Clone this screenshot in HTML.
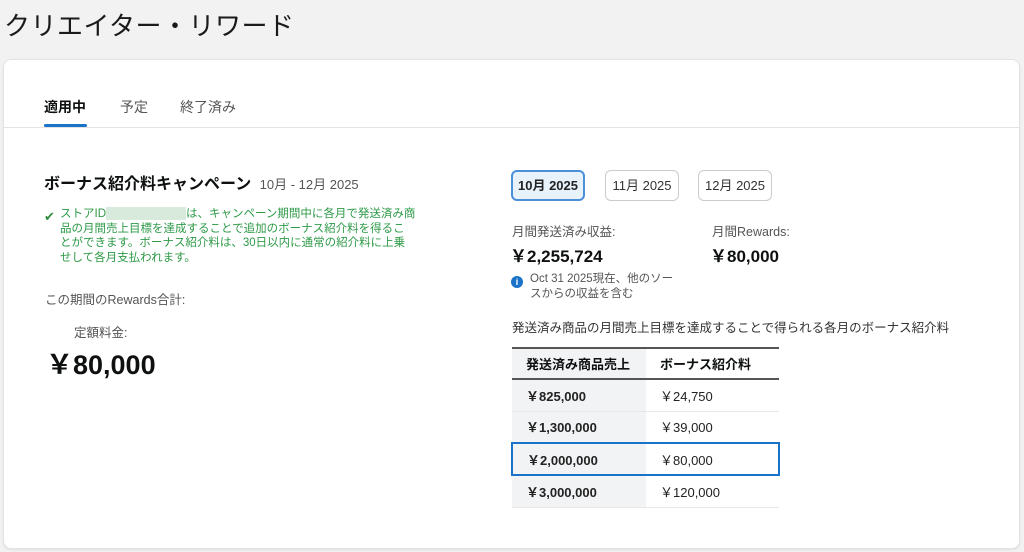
<!DOCTYPE html>
<html><head><meta charset="utf-8"><style>
*{margin:0;padding:0;box-sizing:border-box}
body{width:1024px;height:552px;background:#f2f2f2;font-family:"Liberation Sans","Noto Sans CJK JP",sans-serif;color:#0f1111;position:relative;overflow:hidden}
.abs{position:absolute;white-space:nowrap}
h1{position:absolute;left:4px;top:6px;font-size:26px;font-weight:400;color:#1a1a1a;letter-spacing:0.5px}
.card{position:absolute;left:3px;top:59px;width:1017px;height:490px;background:#fff;border:1px solid #e3e3e3;border-radius:8px;box-shadow:0 1px 2px rgba(0,0,0,.08)}
.tab{font-size:14px;color:#555}
.btn{position:absolute;top:170px;height:31px;width:74px;border:1px solid #c8ccd0;border-radius:6px;font-size:13px;text-align:center;line-height:29px;color:#333}
table{position:absolute;left:511px;top:347px;border-collapse:collapse;font-size:13px}
td,th{height:32px;text-align:left;padding-left:14px}
th{font-weight:700;border-top:2px solid #555;border-bottom:2px solid #555;height:31px}
td:first-child,th:first-child{background:#f2f3f5;width:134px;font-weight:700}
td:last-child,th:last-child{width:133px}
td{border-bottom:1px solid #e7e7e7;color:#222}
tr.hl td{border-top:2px solid #1a73c9;border-bottom:2px solid #1a73c9}
tr.hl td:first-child{border-left:2px solid #1a73c9}
tr.hl td:last-child{border-right:2px solid #1a73c9}
</style></head><body>
<h1>クリエイター・リワード</h1>
<div class="card"></div>
<div class="abs tab" style="left:44px;top:97px;color:#0f1111;font-weight:700">適用中</div>
<div class="abs" style="left:44px;top:124px;width:43px;height:3px;background:#1a73c9;border-radius:2px"></div>
<div class="abs tab" style="left:120px;top:97px">予定</div>
<div class="abs tab" style="left:180px;top:97px">終了済み</div>
<div class="abs" style="left:4px;top:127px;width:1015px;height:1px;background:#e3e3e3"></div>

<div class="abs" style="left:44px;top:170px;font-size:16px;font-weight:700">ボーナス紹介料キャンペーン <span style="font-size:13px;font-weight:400;color:#555;margin-left:4px">10月 - 12月 2025</span></div>
<div class="abs" style="left:44px;top:209px;color:#2e8b3a;font-size:13px">✔</div>
<div class="abs" style="left:60px;top:207px;font-size:11.5px;line-height:14.5px;color:#2e9a48;white-space:normal;width:356px">ストアID<span style="display:inline-block;width:80px;height:13px;background:#d8eadc;vertical-align:middle"></span>は、キャンペーン期間中に各月で発送済み商品の月間売上目標を達成することで追加のボーナス紹介料を得ることができます。ボーナス紹介料は、30日以内に通常の紹介料に上乗せして各月支払われます。</div>
<div class="abs" style="left:45px;top:289px;font-size:12.5px;color:#555">この期間のRewards合計:</div>
<div class="abs" style="left:74px;top:322px;font-size:12.5px;color:#555">定額料金:</div>
<div class="abs" style="left:46px;top:343px;font-size:27px;font-weight:700">￥80,000</div>

<div class="btn" style="left:511px;background:#e8f2fb;border:2px solid #4a90d9;line-height:27px;font-weight:700;color:#222">10月 2025</div>
<div class="btn" style="left:605px">11月 2025</div>
<div class="btn" style="left:698px">12月 2025</div>

<div class="abs" style="left:512px;top:221px;font-size:12.5px;color:#555">月間発送済み収益:</div>
<div class="abs" style="left:510px;top:242px;font-size:17px;font-weight:700">￥2,255,724</div>
<div class="abs" style="left:712px;top:221px;font-size:12.5px;color:#555">月間Rewards:</div>
<div class="abs" style="left:710px;top:242px;font-size:17px;font-weight:700">￥80,000</div>
<div class="abs" style="left:511px;top:276px;width:12px;height:12px;border-radius:50%;background:#1a73c9;color:#fff;font-size:9px;font-weight:700;text-align:center;line-height:12px">i</div>
<div class="abs" style="left:530px;top:272px;font-size:11.5px;line-height:15px;color:#555">Oct 31 2025現在、他のソー<br>スからの収益を含む</div>
<div class="abs" style="left:512px;top:317px;font-size:12.5px;color:#333">発送済み商品の月間売上目標を達成することで得られる各月のボーナス紹介料</div>

<table>
<tr><th>発送済み商品売上</th><th style="background:#fff">ボーナス紹介料</th></tr>
<tr><td>￥825,000</td><td>￥24,750</td></tr>
<tr><td>￥1,300,000</td><td>￥39,000</td></tr>
<tr class="hl"><td>￥2,000,000</td><td>￥80,000</td></tr>
<tr><td>￥3,000,000</td><td>￥120,000</td></tr>
</table>
</body></html>
